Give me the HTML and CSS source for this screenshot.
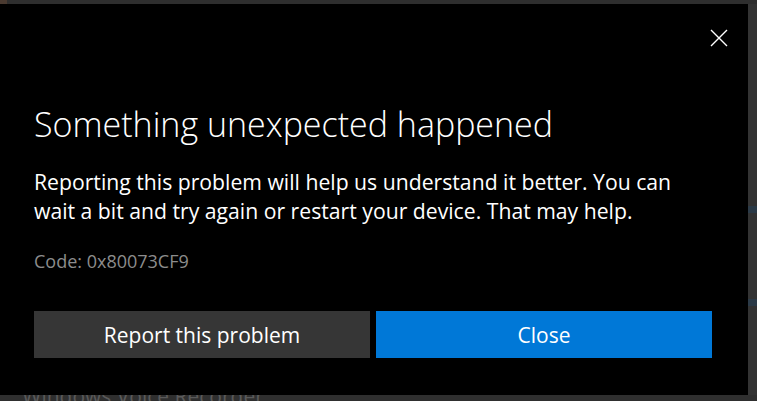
FILE: index.html
```html
<!DOCTYPE html>
<html>
<head>
<meta charset="utf-8">
<link rel="stylesheet" href="styles.css">
</head>
<body>
<div class="screen">
  <div class="top-strip"><span class="top-accent"></span></div>
  <div class="middle">
    <div class="dialog">
      <div class="close-row">
        <button class="close-x" aria-label="Close">
          <svg width="18" height="18" viewBox="0 0 18 18"><path d="M1 1 L17 17 M17 1 L1 17" stroke="#ffffff" stroke-width="1.4" fill="none"/></svg>
        </button>
      </div>
      <h1 class="title">Something unexpected happened</h1>
      <p class="message">Reporting this problem will help us understand it better. You can wait a bit and try again or restart your device. That may help.</p>
      <p class="code">Code: 0x80073CF9</p>
      <div class="buttons">
        <button class="btn btn-secondary">Report this problem</button>
        <button class="btn btn-primary">Close</button>
      </div>
    </div>
    <div class="right-strip">
      <span class="bar bar-1"></span>
      <span class="bar bar-2"></span>
    </div>
  </div>
  <div class="bottom-strip"><span class="bg-text">Windows Voice Recorder</span></div>
</div>
</body>
</html>
```

FILE: styles.css
```css
html, body {
  margin: 0;
  padding: 0;
  background: #2d2d2d;
  width: 757px;
  height: 401px;
  overflow: hidden;
  font-family: "Open Sans", "Noto Sans", sans-serif;
}
.screen {
  display: flex;
  flex-direction: column;
  width: 757px;
  height: 401px;
}
.top-strip {
  height: 4px;
  background: #2e2e2e;
  display: flex;
}
.top-accent {
  width: 7px;
  height: 4px;
  background: #4a3a30;
}
.middle {
  display: flex;
  height: 391px;
}
.dialog {
  width: 748px;
  height: 391px;
  background: #000;
  box-sizing: border-box;
  padding: 0 36px 0 34px;
  display: flex;
  flex-direction: column;
}
.close-row {
  display: flex;
  justify-content: flex-end;
  padding-top: 21px;
  margin-right: -20px;
}
.close-x {
  background: none;
  border: 0;
  padding: 4px;
  width: 26px;
  height: 26px;
  display: flex;
  align-items: center;
  justify-content: center;
}
.title {
  margin: 53px 0 0 0;
  font-weight: 300;
  font-size: 34px;
  line-height: 40px;
  color: #fff;
}
.message {
  margin: 23px 0 0 0;
  max-width: 665px;
  font-size: 21.2px;
  line-height: 29px;
  color: #fff;
}
.code {
  margin: 25px 0 0 0;
  font-size: 18px;
  line-height: 22px;
  color: #8c8c8c;
}
.buttons {
  display: flex;
  gap: 6px;
  margin-top: 39px;
}
.btn {
  flex: 1;
  height: 47px;
  border: 0;
  padding: 0;
  font-family: "Open Sans", "Noto Sans", sans-serif;
  font-size: 21px;
  color: #fff;
}
.btn-secondary { background: #363636; }
.btn-primary { background: #0078d7; }
.right-strip {
  width: 9px;
  background: #333333;
  display: flex;
  flex-direction: column;
}
.bar {
  height: 7px;
  background: #2b3a47;
}
.bar-1 { margin-top: 202px; }
.bar-2 { margin-top: 86px; }
.bottom-strip {
  height: 6px;
  background: #2f2f2f;
  overflow: hidden;
  padding-left: 22px;
}
.bg-text {
  display: block;
  margin-top: -12px;
  font-size: 21px;
  line-height: 26px;
  color: #5a5a5a;
}
```
